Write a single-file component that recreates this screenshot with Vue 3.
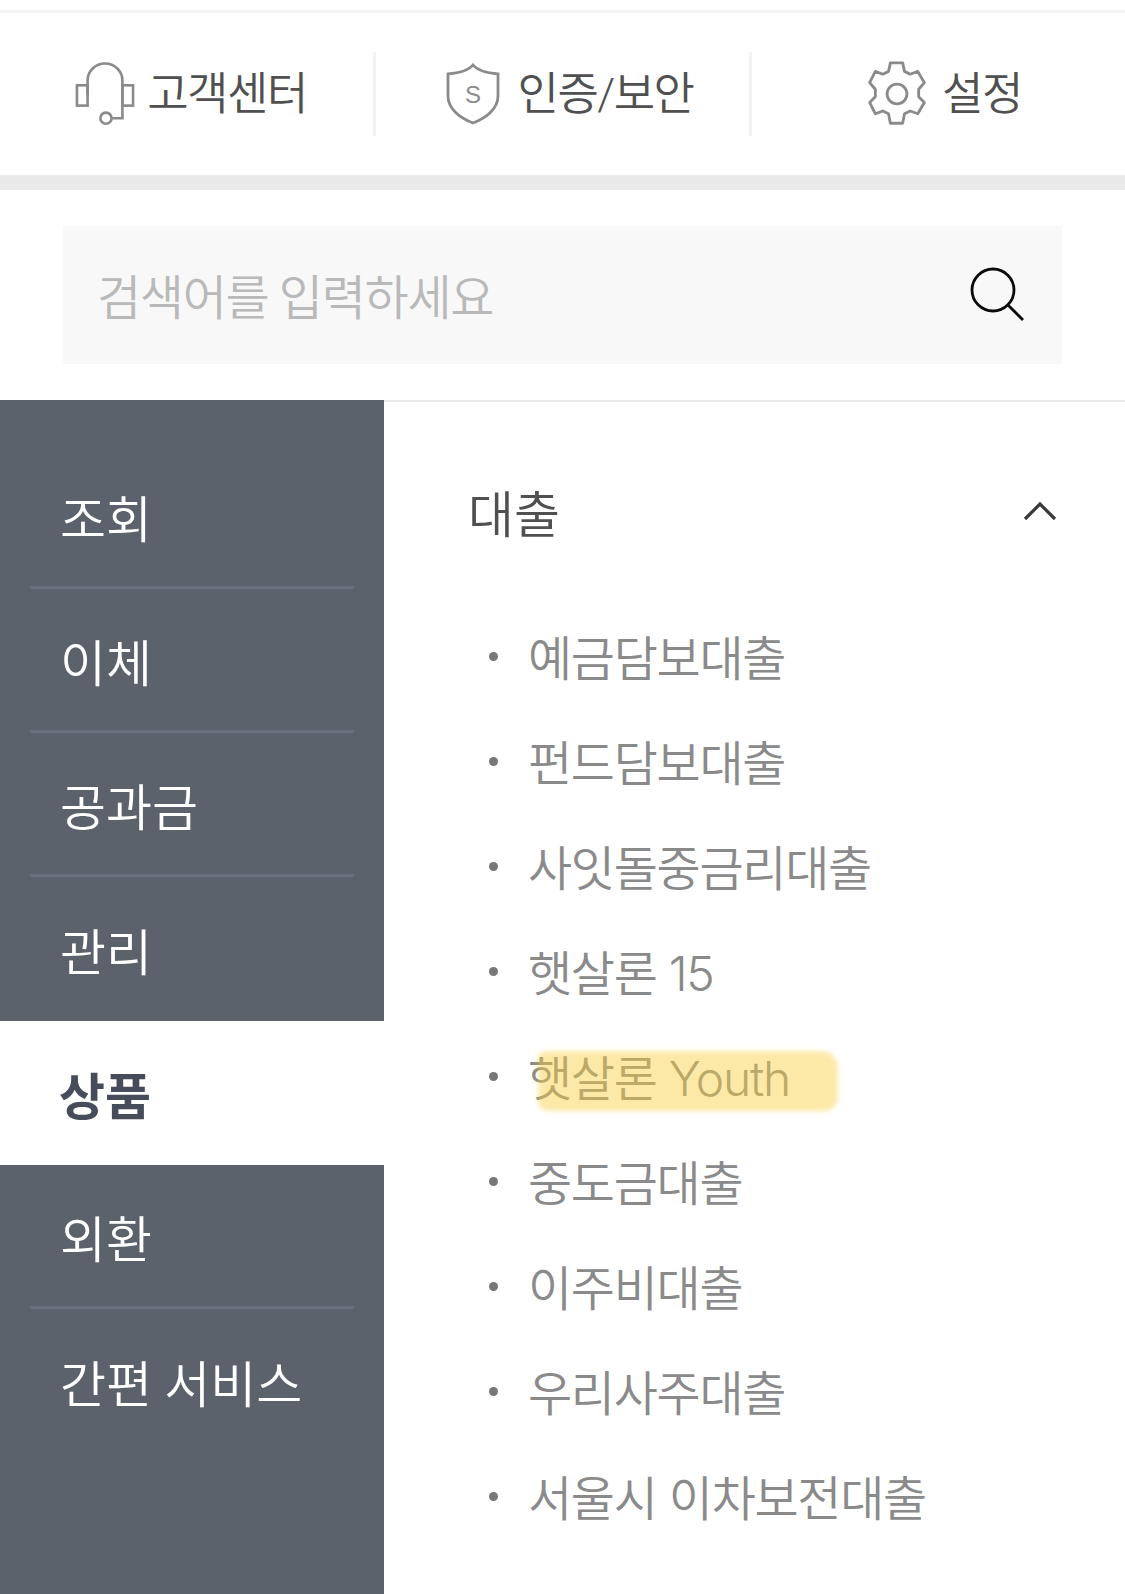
<template>
  <div class="page">
    <div class="top-menu">
      <div class="top-item">
        <svg class="ic" width="60" height="64" viewBox="0 0 62 66" fill="none" stroke="#8a8a8a" stroke-width="2.7">
          <rect x="2" y="24" width="11" height="21" />
          <rect x="49" y="24" width="11" height="21" />
          <path d="M13 34V19a18 17.500 0 0 1 36 0V58H38" />
          <circle cx="32" cy="58" r="5.800" />
        </svg>
        <span>고객센터</span>
      </div>
      <div class="top-item">
        <svg class="ic" width="54" height="62" viewBox="0 0 54 62" fill="none" stroke="#8a8a8a" stroke-width="2.8">
          <path d="M27 2c4 5 13 8 25 9v22c0 13-12 22-25 27C14 55 2 46 2 33V11c12-1 21-4 25-9z" />
          <text x="27" y="40" text-anchor="middle" class="shield-s">S</text>
        </svg>
        <span>인증/보안</span>
      </div>
      <div class="top-item">
        <svg class="ic" width="62" height="66" viewBox="0 0 62 70" fill="none" stroke="#8a8a8a" stroke-width="3" stroke-linejoin="round">
          <path d="M24 2h13l2 9 6 3 8-3 7 12-6 7v8l6 6-7 12-8-3-6 3-2 10H24l-2-10-6-3-8 3-6-12 6-6v-8l-6-7 6-12 8 3 6-3z" />
          <circle cx="31" cy="35" r="10.500" />
        </svg>
        <span>설정</span>
      </div>
    </div>
    <div class="band"></div>

    <div class="search-wrap">
      <div class="search">
        <span class="placeholder">검색어를 입력하세요</span>
        <svg width="56" height="56" viewBox="0 0 56 56" fill="none" stroke="#0a0a0a" stroke-width="2.800">
          <circle cx="24" cy="23" r="21" />
          <path d="M39 38l15 15" />
        </svg>
      </div>
    </div>

    <div class="body">
      <ul class="side">
        <li
          v-for="m in menus"
          :key="m"
          class="side-item"
          :class="{ active: m === '상품' }"
        >{{ m }}</li>
      </ul>
      <div class="content">
        <div class="group-head">
          <span>대출</span>
          <svg width="34" height="22" viewBox="0 0 34 22" fill="none" stroke="#3a3a3a" stroke-width="3.200">
            <path d="M2 19L17 4l15 15" />
          </svg>
        </div>
        <ul class="sub">
          <li v-for="s in loans" :key="s" class="sub-item">
            <i class="dot"></i>
            <span>{{ s }}</span>
            <b v-if="s === '햇살론 Youth'" class="marker"></b>
          </li>
        </ul>
      </div>
    </div>
  </div>
</template>

<script setup>
const menus = ['조회', '이체', '공과금', '관리', '상품', '외환', '간편 서비스']
const loans = [
  '예금담보대출',
  '펀드담보대출',
  '사잇돌중금리대출',
  '햇살론 15',
  '햇살론 Youth',
  '중도금대출',
  '이주비대출',
  '우리사주대출',
  '서울시 이차보전대출'
]
</script>

<style>
html, body { margin: 0; background: #fff; }
</style>

<style scoped>
.page {
  width: 1125px;
  height: 1594px;
  overflow: hidden;
  display: flex;
  flex-direction: column;
  background: #fff;
  font-family: Roboto, "Noto Sans CJK KR", "Noto Sans", sans-serif;
  font-weight: 350;
}
.top-menu {
  margin-top: 10px;
  border-top: 3px solid #f3f3f3;
  height: 162px;
  display: grid;
  grid-template-columns: 376px 376px 373px;
  align-items: center;
}
.top-item {
  box-sizing: border-box;
  height: 84px;
  display: flex;
  align-items: center;
  justify-content: center;
  gap: 12px;
  font-size: 45px;
  color: #505050;
  border-right: 3px solid #f3f3f3;
}
.top-item span { letter-spacing: -1.500px; margin-bottom: 8px; }
.top-item:first-child { padding-left: 9px; }
.top-item:nth-child(2) { padding-left: 14px; gap: 18px; }
.top-item:last-child { padding-left: 11px; gap: 14px; border-right: 0; }
.shield-s {
  font-family: "Liberation Sans", sans-serif;
  font-size: 24px;
  font-weight: 400;
  fill: #8a8a8a;
  stroke: none;
}
.band { height: 15px; background: #e9e9e9; }
.search-wrap {
  padding: 36px 63px;
  border-bottom: 2px solid #e9e9e9;
}
.search {
  height: 138px;
  box-sizing: border-box;
  padding: 0 37px 0 34px;
  background: #f8f8f8;
  display: flex;
  align-items: center;
  justify-content: space-between;
}
.placeholder { font-size: 48px; color: #b9b9b9; letter-spacing: -1.300px; margin-bottom: 2px; }
.body { flex: 1; display: flex; min-height: 0; }
.side {
  width: 384px;
  margin: -2px 0 0;
  padding: 45px 0 0;
  list-style: none;
  background: #5b626c;
}
.side-item {
  height: 144px;
  margin: 0 30px;
  box-sizing: border-box;
  display: flex;
  align-items: center;
  color: #fff;
  font-size: 50px;
  padding-left: 30px;
  border-bottom: 3px solid #6a717c;
}
.side-item:nth-child(4), .side-item:nth-child(5), .side-item:last-child { border-bottom: 0; }
.side-item.active {
  margin: 0;
  padding-left: 59px;
  background: #fff;
  color: #464c5a;
  font-weight: 700;
}
.content { flex: 1; padding: 0 68px 0 84px; }
.group-head {
  margin-top: 44px;
  height: 130px;
  display: flex;
  align-items: center;
  justify-content: space-between;
  font-size: 50px;
  color: #505050;
}
.sub { margin: 26px 0 0; padding: 0 0 0 16px; list-style: none; }
.sub-item {
  position: relative;
  height: 105px;
  display: flex;
  align-items: center;
  color: #8a8a8a;
  font-family: Inter, "Noto Sans CJK KR", sans-serif;
  font-size: 48px;
  letter-spacing: -1.300px;
}
.dot {
  width: 9px;
  height: 9px;
  border-radius: 50%;
  background: #777;
  margin: 3px 30px 0 5px;
}
.marker {
  position: absolute;
  left: 54px;
  top: 29px;
  width: 300px;
  height: 60px;
  background: rgba(248, 206, 62, 0.45);
  border-radius: 12px 16px 14px 10px / 6px 18px 14px 8px;
  filter: blur(2.500px);
}
</style>
